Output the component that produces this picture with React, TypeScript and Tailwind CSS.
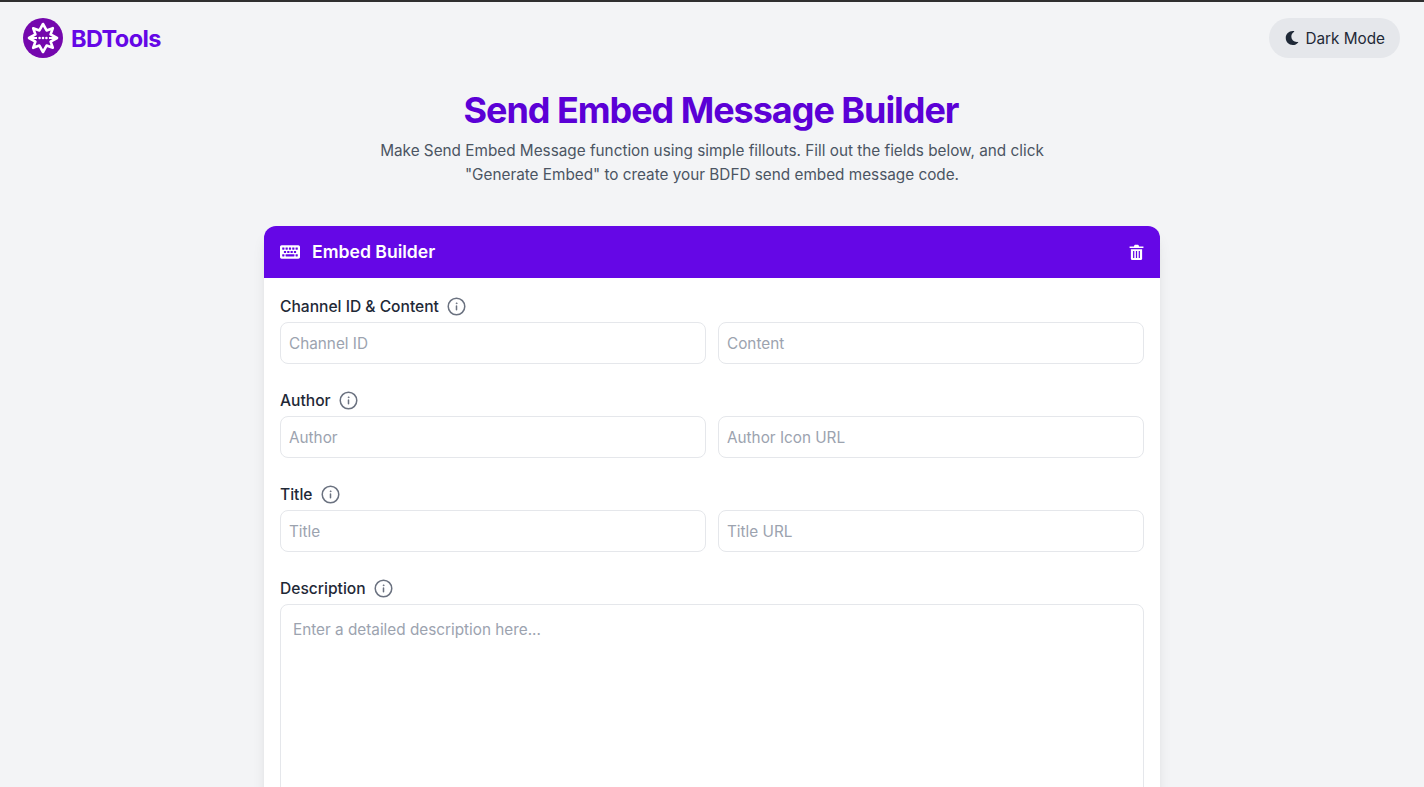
import React from "react";
import { FaMoon, FaKeyboard } from "react-icons/fa";

const Info = () => (
  <svg width="19" height="19" viewBox="0 0 20 20" fill="none" stroke="#6b7280" strokeWidth="1.6" strokeLinecap="round">
    <circle cx="10" cy="10" r="8.7" />
    <path d="M10 9.5v4" />
    <circle cx="10" cy="6.6" r="0.5" fill="#6b7280" strokeWidth="0.8" />
  </svg>
);

const Logo = () => (
  <svg width="40" height="40" viewBox="0 0 40 40" className="shrink-0">
    <circle cx="20" cy="20" r="20" fill="#7407ad" />
    <path
      d="M20 6 L23.6 12.4 L29.8 10.2 L27.6 16.4 L34 20 L27.6 23.6 L29.8 29.8 L23.6 27.6 L20 34 L16.4 27.6 L10.2 29.8 L12.4 23.6 L6 20 L12.4 16.4 L10.2 10.2 L16.4 12.4 Z"
      fill="none"
      stroke="#fff"
      strokeWidth="2.6"
      strokeLinejoin="round"
    />
    <path d="M8 20H14M26 20H32" stroke="#fff" strokeWidth="1.8" />
    <circle cx="16.6" cy="20" r="1.3" fill="#fff" />
    <circle cx="20" cy="20" r="1.3" fill="#fff" />
    <circle cx="23.4" cy="20" r="1.3" fill="#fff" />
  </svg>
);

const Trash = () => (
  <svg width="15" height="17" viewBox="0 0 16 17">
    <path d="M5.5 1.2 Q5.7 .3 6.6 .3 H9.4 Q10.3 .3 10.5 1.2 L10.7 2 H15.4 V3.6 H.6 V2 H5.3 Z" fill="#fff" />
    <path d="M2 5 H14 V15 Q14 16.6 12.4 16.6 H3.6 Q2 16.6 2 15 Z" fill="#fff" />
    <path d="M5 7 V14.4 M8 7 V14.4 M11 7 V14.4" stroke="#6507e6" strokeWidth="1.3" />
  </svg>
);

const Field = ({ ph }: { ph: string }) => (
  <input
    placeholder={ph}
    className="w-full h-[42px] min-w-0 rounded-lg border border-[#e5e7eb] bg-white px-2 text-[15.3px] text-[#111827] placeholder:text-[#9ca3af] outline-none"
  />
);

const Label = ({ text }: { text: string }) => (
  <div className="flex items-center gap-2 h-6 mb-1 text-[15.6px] font-medium text-[#1f2937]">
    <span className="h-6 leading-[26px]">{text}</span>
    <Info />
  </div>
);

const Row = ({ label, a, b }: { label: string; a: string; b: string }) => (
  <div className="mb-6">
    <Label text={label} />
    <div className="grid grid-cols-2 gap-3">
      <Field ph={a} />
      <Field ph={b} />
    </div>
  </div>
);

export default function App() {
  return (
    <div
      className="h-[787px] overflow-hidden bg-[#f3f4f6] border-t-2 border-[#2f2f2f]"
      style={{ fontFamily: "Inter, 'Liberation Sans', sans-serif" }}
    >
      <header className="flex items-center justify-between pl-[23px] pr-6 pt-4">
        <div className="flex items-center gap-2">
          <Logo />
          <span className="h-10 text-[23.5px] leading-[42px] font-bold text-[#6507e6] tracking-tight">BDTools</span>
        </div>
        <button className="flex items-center gap-[6px] h-10 pl-4 pr-[15px] rounded-full bg-[#e5e7eb] text-[15.3px] text-[#1f2937]">
          <FaMoon className="w-3.5 h-3.5" />
          <span className="h-10 leading-[42px]">Dark Mode</span>
        </button>
      </header>

      <section className="mt-8 flex flex-col items-center text-center">
        <h1 className="pr-0.5 text-4xl font-bold text-[#5b00d6] leading-10 tracking-[-1.05px]">Send Embed Message Builder</h1>
        <p className="mt-[9px] w-[678px] text-[15.3px] leading-6 text-[#4b5563]">
          Make Send Embed Message function using simple fillouts. Fill out the fields below, and click "Generate Embed" to create your BDFD send embed message code.
        </p>
      </section>

      <main className="mx-auto mt-[39px] w-[896px] rounded-t-xl bg-white shadow-lg">
        <div className="flex items-center justify-between h-[52px] px-4 rounded-t-xl bg-[#6507e6] text-white">
          <div className="flex items-center gap-3">
            <FaKeyboard className="w-5 h-5" />
            <span className="text-[17.6px] font-semibold">Embed Builder</span>
          </div>
          <Trash />
        </div>
        <div className="p-4">
          <Row label="Channel ID & Content" a="Channel ID" b="Content" />
          <Row label="Author" a="Author" b="Author Icon URL" />
          <Row label="Title" a="Title" b="Title URL" />
          <Label text="Description" />
          <textarea
            placeholder="Enter a detailed description here..."
            className="block w-full h-[300px] resize-none rounded-lg border border-[#e5e7eb] bg-white px-3 pt-[14px] text-[15.3px] placeholder:text-[#9ca3af] outline-none"
          />
        </div>
      </main>
    </div>
  );
}
